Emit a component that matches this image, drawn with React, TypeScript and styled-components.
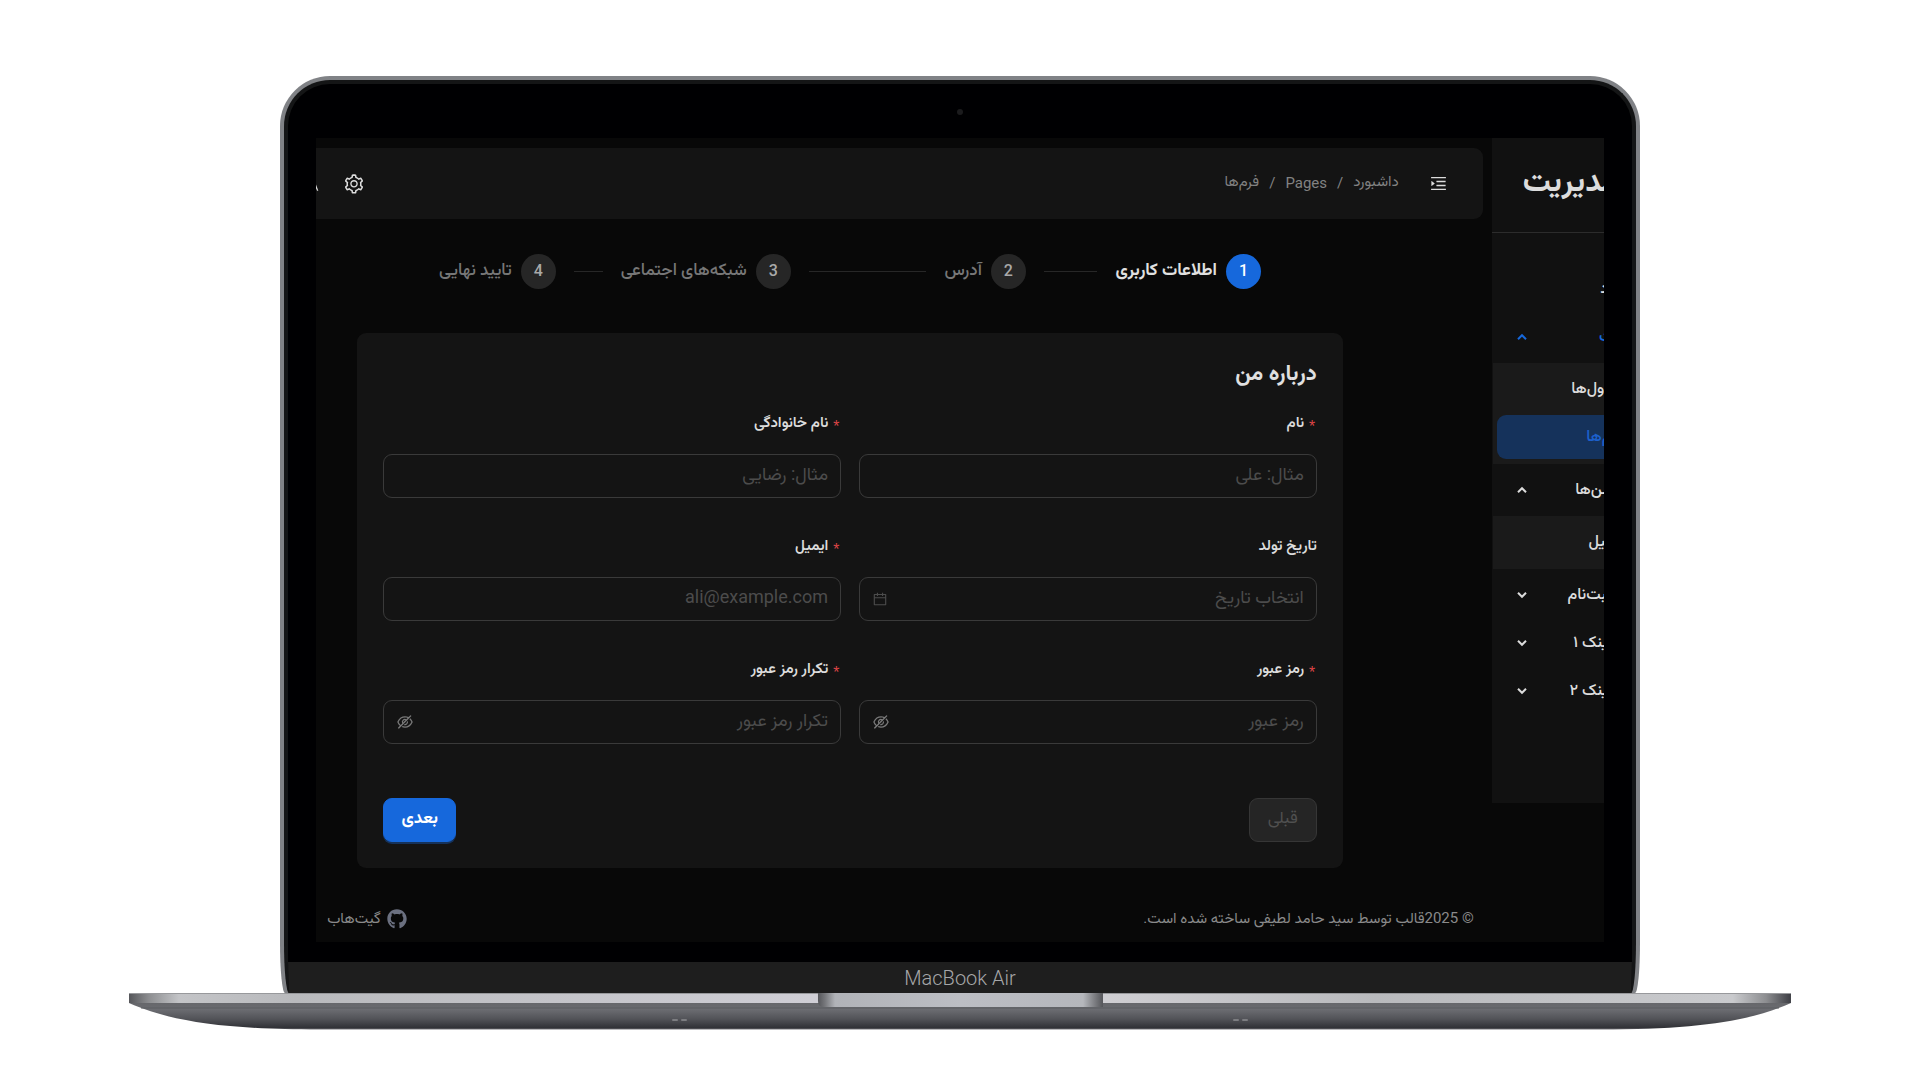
import React from "react";
import styled, { createGlobalStyle } from "styled-components";
import {
  AiOutlineCalendar,
  AiOutlineEyeInvisible,
  AiOutlineMenuUnfold,
  AiOutlineSetting,
} from "react-icons/ai";
import { FaGithub } from "react-icons/fa";
import { MdTranslate } from "react-icons/md";

const GlobalStyle = createGlobalStyle`
  *, *::before, *::after { box-sizing: border-box; }
  body {
    margin: 0;
    background: #ffffff;
    font-family: Roboto, "Vazirmatn", "Noto Sans Arabic", "DejaVu Sans", sans-serif;
  }
  button, input { font-family: inherit; }
`;

const Page = styled.main`
  min-height: 100vh;
  padding: 76px 6.72% 48px;
  background: #ffffff;
`;

/* ---------- laptop ---------- */

const Lid = styled.div`
  margin: 0 9.1%;
  padding: 4px 4px 0;
  background: #808286;
  border-radius: 50px 50px 5px 5px / 50px 50px 50px 50px;
  overflow: hidden;
`;

const Bezel = styled.div`
  border: 4px solid #141516;
  border-bottom: 0;
  border-radius: 46px 46px 5px 5px / 46px 46px 50px 50px;
  background: #000002;
  overflow: hidden;
`;

const CameraBar = styled.div`
  height: 54px;
  padding-top: 2px;
  display: flex;
  justify-content: center;
  align-items: center;
`;

const Camera = styled.span`
  width: 6px;
  height: 6px;
  border-radius: 50%;
  background: #1b1b1d;
`;

const Screen = styled.div`
  margin: 0 28px 20px;
  overflow: hidden;
  background: #080808;
`;

const Chin = styled.div`
  height: 31px;
  display: flex;
  justify-content: center;
  align-items: center;
  background: #1e1e1e;
  color: #a6a7a9;
  font-size: 20px;
  font-weight: 300;
  line-height: 24px;
`;

const BaseDrawing = styled.svg`
  display: block;
  width: 100%;
  height: 37px;
`;

/* ---------- dashboard shell ---------- */

const Dashboard = styled.div`
  display: flex;
  align-items: flex-start;
  color: #dcdcdc;
`;

const Sidebar = styled.aside`
  flex: none;
  width: 232px;
  margin-right: -120px;
  padding-bottom: 90px;
  background: #111111;
`;

const Brand = styled.h1`
  height: 95px;
  margin: 0 0 34px;
  padding: 0 70px 4px 31px;
  display: flex;
  align-items: center;
  justify-content: flex-end;
  white-space: nowrap;
  border-bottom: 1px solid #2c2c2c;
  font-size: 31px;
  font-weight: 700;
`;

const Menu = styled.nav`
  display: flex;
  flex-direction: column;
  gap: 4px;
  padding-left: 1px;
`;

const Submenu = styled.div`
  display: flex;
  flex-direction: column;
  gap: 4px;
  padding: 4px 0 5px;
  background: #1a1a1a;
`;

const MenuToggle = styled.button<{ $active?: boolean }>`
  height: 44px;
  margin: 0 4px;
  padding: 0 70px 0 20px;
  display: flex;
  align-items: center;
  justify-content: space-between;
  border: 0;
  background: transparent;
  color: ${(p) => (p.$active ? "#1668dc" : "#dcdcdc")};
  font-size: 16px;
  font-weight: 500;
  white-space: nowrap;
  cursor: pointer;
`;

const MenuLink = styled.a<{ $selected?: boolean; $inset?: boolean }>`
  height: 44px;
  margin: 0 4px;
  padding-right: ${(p) => (p.$inset ? 96 : 70)}px;
  display: flex;
  align-items: center;
  border-radius: 9px;
  background: ${(p) => (p.$selected ? "#15325b" : "transparent")};
  color: ${(p) => (p.$selected ? "#1c60cd" : "#dcdcdc")};
  font-size: 16px;
  font-weight: 500;
  white-space: nowrap;
  text-decoration: none;
`;

const Main = styled.div`
  flex: 1;
  min-width: 0;
  margin-left: -32px;
`;

const Header = styled.header`
  height: 71px;
  margin: 10px 9px 0 0;
  padding: 0 35px 0 19px;
  display: flex;
  align-items: center;
  border-radius: 9px;
  background: #141414;
`;

const IconButton = styled.button`
  padding: 0;
  display: flex;
  border: 0;
  background: transparent;
  color: #dcdcdc;
  cursor: pointer;
`;

const Crumbs = styled.nav`
  flex: 1;
  margin-right: 30px;
  padding-bottom: 2px;
  display: flex;
  align-items: center;
  gap: 10px;
  color: #828282;
  font-size: 15px;
`;

const Crumb = styled.a`
  color: inherit;
  text-decoration: none;
`;

const HeaderActions = styled.div`
  display: flex;
  align-items: center;
  gap: 24px;
`;

const Content = styled.div`
  padding: 35px 149px 0 73px;
`;

/* ---------- steps ---------- */

const Steps = styled.ol`
  list-style: none;
  width: 83.4%;
  margin: 0 auto 44px;
  padding: 0;
  display: flex;
  gap: 18px;
`;

const Step = styled.li<{ $active: boolean }>`
  flex: 1;
  display: flex;
  align-items: center;
  white-space: nowrap;
  color: ${(p) => (p.$active ? "#e0e0e0" : "#777777")};
  font-size: 17px;
  font-weight: ${(p) => (p.$active ? 700 : 500)};
  &:last-child { flex: none; }
  &:not(:last-child)::after {
    content: "";
    flex: 1;
    height: 1px;
    margin-right: 18px;
    background: #272727;
  }
`;

const StepNumber = styled.span<{ $active: boolean }>`
  flex: none;
  width: 35px;
  height: 35px;
  margin-left: 9px;
  padding-bottom: 2px;
  display: flex;
  align-items: center;
  justify-content: center;
  border-radius: 50%;
  background: ${(p) => (p.$active ? "#1668dc" : "#262626")};
  color: ${(p) => (p.$active ? "#ffffff" : "#a9a9a9")};
  font-size: 16px;
  font-weight: 500;
`;

const StepTitle = styled.span`
  padding-bottom: 2px;
`;

/* ---------- form ---------- */

const Card = styled.form`
  padding: 26px;
  border-radius: 9px;
  background: #141414;
`;

const CardTitle = styled.h2`
  margin: 0 0 17px;
  font-size: 22px;
  line-height: 28px;
  font-weight: 700;
  color: #e0e0e0;
`;

const Fields = styled.div`
  display: grid;
  grid-template-columns: 1fr 1fr;
  gap: 29px 18px;
`;

const Label = styled.label`
  height: 38px;
  margin-bottom: 12px;
  padding-top: 1px;
  display: flex;
  align-items: center;
  gap: 3px;
  color: #dcdcdc;
  font-size: 15px;
  font-weight: 600;
`;

const Required = styled.span`
  padding-top: 8px;
  color: #dc4446;
  font-family: "Liberation Mono", monospace;
  font-size: 16px;
  font-weight: 400;
  line-height: 14px;
`;

const InputBox = styled.div`
  height: 44px;
  padding: 0 12px;
  display: flex;
  align-items: center;
  border: 1px solid #3a3a3a;
  border-radius: 9px;
  color: #4c4c4c;
`;

const Input = styled.input`
  flex: 1;
  min-width: 0;
  height: 100%;
  padding: 0 0 6px;
  border: 0;
  outline: 0;
  background: transparent;
  color: #dcdcdc;
  font-size: 18px;
  &::placeholder { color: #4c4c4c; opacity: 1; }
`;

const RevealButton = styled(IconButton)`
  color: #7a7a7a;
`;

const Actions = styled.div`
  margin-top: 54px;
  display: flex;
  justify-content: space-between;
`;

const ActionButton = styled.button<{ $primary?: boolean }>`
  height: 44px;
  min-width: ${(p) => (p.$primary ? 73 : 68)}px;
  padding: 0 16px 3px;
  border: 1px solid ${(p) => (p.$primary ? "#1668dc" : "#363636")};
  border-radius: 9px;
  background: ${(p) => (p.$primary ? "#1668dc" : "#252525")};
  box-shadow: ${(p) => (p.$primary ? "0 2px 0 #15325b" : "none")};
  color: ${(p) => (p.$primary ? "#ffffff" : "#505050")};
  font-size: 17px;
  font-weight: ${(p) => (p.$primary ? 700 : 400)};
`;

/* ---------- footer ---------- */

const Footer = styled.footer`
  height: 74px;
  padding: 28px 18px 0 43px;
  display: flex;
  align-items: center;
  justify-content: space-between;
  color: #8a8a8a;
  font-size: 15px;
`;

const FooterLink = styled.a`
  display: flex;
  align-items: center;
  gap: 6px;
  color: inherit;
  text-decoration: none;
  svg { color: #6b7080; }
`;

function Chevron({ up }: { up?: boolean }) {
  return (
    <svg width="10" height="8" viewBox="0 0 10 8" fill="none" stroke="currentColor" strokeWidth="2">
      <path d={up ? "M1 6.2 5 2.2 9 6.2" : "M1 1.8 5 5.8 9 1.8"} />
    </svg>
  );
}

function LaptopBase() {
  return (
    <BaseDrawing viewBox="0 0 1662 37" preserveAspectRatio="none" aria-hidden="true">
      <defs>
        <linearGradient id="underside" x1="0" y1="0" x2="0" y2="1">
          <stop offset="0" stopColor="#66676b" />
          <stop offset="0.25" stopColor="#6b6c71" />
          <stop offset="0.6" stopColor="#525358" />
          <stop offset="0.94" stopColor="#303136" />
          <stop offset="1" stopColor="#77777c" />
        </linearGradient>
        <linearGradient id="deck" x1="0" y1="0" x2="1" y2="0">
          <stop offset="0" stopColor="#55565a" />
          <stop offset="0.012" stopColor="#8d8e91" />
          <stop offset="0.03" stopColor="#c3c4c7" />
          <stop offset="0.1" stopColor="#b9babd" />
          <stop offset="0.41" stopColor="#cfced5" />
          <stop offset="0.59" stopColor="#cfced2" />
          <stop offset="0.75" stopColor="#b9babd" />
          <stop offset="0.965" stopColor="#c9cacd" />
          <stop offset="0.985" stopColor="#8d8e91" />
          <stop offset="1" stopColor="#3d3e44" />
        </linearGradient>
        <linearGradient id="notch" x1="0" y1="0" x2="1" y2="0">
          <stop offset="0" stopColor="#55565a" />
          <stop offset="0.025" stopColor="#77787c" />
          <stop offset="0.06" stopColor="#b1b3b8" />
          <stop offset="0.5" stopColor="#bcbec4" />
          <stop offset="0.93" stopColor="#b5b7bc" />
          <stop offset="0.975" stopColor="#77787c" />
          <stop offset="1" stopColor="#55565a" />
        </linearGradient>
      </defs>
      <path d="M0 10C40 28 95 36.500 190 36.500H1472C1567 36.500 1622 28 1662 10Z" fill="url(#underside)" />
      <path d="M12 15H1650" stroke="#5d5e62" strokeWidth="1" />
      <rect width="1662" height="10" fill="url(#deck)" />
      <rect width="1662" height="1" fill="#98999c" />
      <path d="M689 0H974V14H695Q689 14 689 8Z" fill="url(#notch)" />
      <g fill="#7c7d81">
        <rect x="543" y="26" width="6" height="2" rx="1" />
        <rect x="552" y="26" width="6" height="2" rx="1" />
        <rect x="1104" y="26" width="6" height="2" rx="1" />
        <rect x="1113" y="26" width="6" height="2" rx="1" />
      </g>
    </BaseDrawing>
  );
}

type FieldProps = {
  id: string;
  label: string;
  placeholder: string;
  required?: boolean;
  kind?: "text" | "email" | "date" | "password";
};

function Field({ id, label, placeholder, required, kind = "text" }: FieldProps) {
  return (
    <div>
      <Label htmlFor={id}>
        {required && <Required aria-hidden="true">*</Required>}
        {label}
      </Label>
      <InputBox>
        <Input
          id={id}
          dir="rtl"
          type={kind === "password" ? "password" : "text"}
          placeholder={placeholder}
          required={required}
        />
        {kind === "date" && <AiOutlineCalendar size={16} />}
        {kind === "password" && (
          <RevealButton type="button" aria-label="نمایش رمز">
            <AiOutlineEyeInvisible size={18} />
          </RevealButton>
        )}
      </InputBox>
    </div>
  );
}

const steps = ["اطلاعات کاربری", "آدرس", "شبکه‌های اجتماعی", "تایید نهایی"];

const fields: FieldProps[] = [
  { id: "first-name", label: "نام", placeholder: "مثال: علی", required: true },
  { id: "last-name", label: "نام خانوادگی", placeholder: "مثال: رضایی", required: true },
  { id: "birth-date", label: "تاریخ تولد", placeholder: "انتخاب تاریخ", kind: "date" },
  { id: "email", label: "ایمیل", placeholder: "ali@example.com", required: true, kind: "email" },
  { id: "password", label: "رمز عبور", placeholder: "رمز عبور", required: true, kind: "password" },
  { id: "password-repeat", label: "تکرار رمز عبور", placeholder: "تکرار رمز عبور", required: true, kind: "password" },
];

export default function App() {
  return (
    <>
      <GlobalStyle />
      <Page>
        <Lid>
          <Bezel>
            <CameraBar>
              <Camera />
            </CameraBar>
            <Screen>
              <Dashboard dir="rtl" lang="fa">
                <Sidebar>
                  <Brand>مدیریت</Brand>
                  <Menu>
                    <MenuLink href="#dashboard">داشبورد</MenuLink>
                    <MenuToggle $active>
                      صفحات
                      <Chevron up />
                    </MenuToggle>
                    <Submenu>
                      <MenuLink href="#tables" $inset>جدول‌ها</MenuLink>
                      <MenuLink href="#forms" $inset $selected>فرم‌ها</MenuLink>
                    </Submenu>
                    <MenuToggle>
                      اپلیکیشن‌ها
                      <Chevron up />
                    </MenuToggle>
                    <Submenu>
                      <MenuLink href="#email" $inset>ایمیل</MenuLink>
                    </Submenu>
                    <MenuToggle>
                      ورود/ ثبت‌نام
                      <Chevron />
                    </MenuToggle>
                    <MenuToggle>
                      منوی لینک ۱
                      <Chevron />
                    </MenuToggle>
                    <MenuToggle>
                      منوی لینک ۲
                      <Chevron />
                    </MenuToggle>
                  </Menu>
                </Sidebar>
                <Main>
                  <Header>
                    <IconButton aria-label="منو">
                      <AiOutlineMenuUnfold size={19} />
                    </IconButton>
                    <Crumbs>
                      <Crumb href="#dashboard">داشبورد</Crumb>
                      <span>/</span>
                      <Crumb href="#pages">Pages</Crumb>
                      <span>/</span>
                      <span>فرم‌ها</span>
                    </Crumbs>
                    <HeaderActions>
                      <IconButton aria-label="تنظیمات">
                        <AiOutlineSetting size={22} />
                      </IconButton>
                      <IconButton aria-label="زبان">
                        <MdTranslate size={16} />
                      </IconButton>
                    </HeaderActions>
                  </Header>
                  <Content>
                    <Steps>
                      {steps.map((title, index) => (
                        <Step key={title} $active={index === 0}>
                          <StepNumber $active={index === 0}>{index + 1}</StepNumber>
                          <StepTitle>{title}</StepTitle>
                        </Step>
                      ))}
                    </Steps>
                    <Card onSubmit={(event) => event.preventDefault()}>
                      <CardTitle>درباره من</CardTitle>
                      <Fields>
                        {fields.map((field) => (
                          <Field key={field.id} {...field} />
                        ))}
                      </Fields>
                      <Actions>
                        <ActionButton type="button" disabled>قبلی</ActionButton>
                        <ActionButton type="submit" $primary>بعدی</ActionButton>
                      </Actions>
                    </Card>
                  </Content>
                  <Footer>
                    <span>© 2025قالب توسط سید حامد لطیفی ساخته شده است.</span>
                    <FooterLink href="#github">
                      <FaGithub size={20} />
                      <span>گیت‌هاب</span>
                    </FooterLink>
                  </Footer>
                </Main>
              </Dashboard>
            </Screen>
            <Chin>MacBook Air</Chin>
          </Bezel>
        </Lid>
        <LaptopBase />
      </Page>
    </>
  );
}
